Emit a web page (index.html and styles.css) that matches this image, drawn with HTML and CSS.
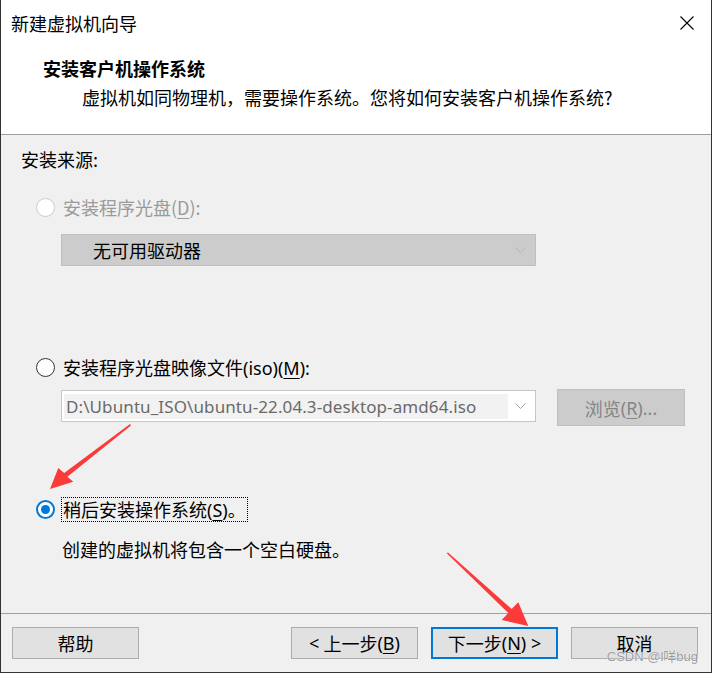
FILE: index.html
```html
<!DOCTYPE html>
<html lang="zh-CN">
<head>
<meta charset="utf-8">
<title>新建虚拟机向导</title>
<link rel="stylesheet" href="styles.css">
</head>
<body>
<div class="window">
  <header class="head">
    <div class="titlebar">
      <span class="title">新建虚拟机向导</span>
      <svg class="close" width="14" height="14" viewBox="0 0 14 14"><path d="M0.5 0.5 L13.5 13.5 M13.5 0.5 L0.5 13.5" stroke="#000" stroke-width="1.1" fill="none"/></svg>
    </div>
    <h1 class="heading">安装客户机操作系统</h1>
    <p class="subtitle">虚拟机如同物理机，需要操作系统。您将如何安装客户机操作系统?</p>
  </header>
  <main class="body">
    <div class="section-label">安装来源:</div>

    <div class="radio-row radio-row--first">
      <span class="radio radio--disabled"></span>
      <span class="label label--disabled">安装程序光盘(<u>D</u>):</span>
    </div>
    <div class="combo combo--disabled">
      <span class="combo-text">无可用驱动器</span>
      <svg class="chev" width="11" height="6" viewBox="0 0 11 6"><path d="M0.5 0.5 L5.5 5.5 L10.5 0.5" stroke="#b4b4b4" fill="none"/></svg>
    </div>

    <div class="radio-row radio-row--second">
      <span class="radio"></span>
      <span class="label">安装程序光盘映像文件<span class="latin">(iso)(<u>M</u>):</span></span>
    </div>
    <div class="iso-row">
      <div class="combo combo--iso">
        <span class="iso-field">D:\Ubuntu_ISO\ubuntu-22.04.3-desktop-amd64.iso</span>
        <svg class="chev" width="11" height="6" viewBox="0 0 11 6"><path d="M0.5 0.5 L5.5 5.5 L10.5 0.5" stroke="#a0a0a0" fill="none"/></svg>
      </div>
      <div class="btn btn--browse">浏览<span class="latin">(<u>R</u>)...</span></div>
    </div>

    <div class="radio-row radio-row--third">
      <span class="radio radio--checked"><span class="dot"></span></span>
      <span class="label label--focus">稍后安装操作系统<span class="latin">(<u>S</u>)</span>。</span>
    </div>
    <p class="note">创建的虚拟机将包含一个空白硬盘。</p>
  </main>
  <footer class="foot">
    <div class="btn">帮助</div>
    <div class="foot-right">
      <div class="btn"><span class="latin">&lt;</span> 上一步<span class="latin">(<u>B</u>)</span></div>
      <div class="btn btn--default">下一步<span class="latin">(<u>N</u>) &gt;</span></div>
      <div class="btn">取消</div>
    </div>
  </footer>

  <svg class="arrows" width="712" height="673" viewBox="0 0 712 673">
    <polygon fill="#fb3a3a" points="130,424 131,425.6 67.4,476.7 73.3,481.7 50,489 58.3,468 64.2,472.9"/>
    <polygon fill="#fb3a3a" points="446.7,553.3 448,552.4 511.7,609.1 518.3,602.3 528.3,626 501.7,620 508.3,612.9"/>
  </svg>
  <div class="watermark">CSDN @l咩bug</div>
</div>
</body>
</html>
```

FILE: styles.css
```css
* { box-sizing: border-box; }
html, body { margin: 0; padding: 0; background: #f0f0f0; }
body {
  font-family: "Noto Sans CJK SC", "Noto Sans", sans-serif;
  font-size: 18px;
  color: #000;
}
.window {
  position: relative;
  width: 712px;
  height: 673px;
  border-left: 1px solid #333;
  border-right: 1px solid #333;
  border-bottom: 1px solid #333;
  display: flex;
  flex-direction: column;
  background: #f0f0f0;
  overflow: hidden;
}
.latin { font-family: "Noto Sans", "Noto Sans CJK SC", sans-serif; }
u { text-decoration-thickness: 1px; text-underline-offset: 3px; }

.head {
  background: #fff;
  height: 135px;
  border-bottom: 1px solid #a0a0a0;
  flex: none;
}
.titlebar {
  height: 46px;
  display: flex;
  align-items: center;
  justify-content: space-between;
  padding-left: 10px;
  padding-right: 17px;
}
.title { line-height: 24px; }
.close { display: block; }
.heading {
  margin: 10px 0 0 42px;
  font-size: 18px;
  font-weight: 700;
  line-height: 24px;
}
.subtitle {
  margin: 5px 0 0 81px;
  line-height: 24px;
}

.body {
  flex: 1;
  padding: 12px 0 0 20px;
}
.section-label { line-height: 24px; }
.radio-row {
  display: flex;
  align-items: center;
  height: 24px;
  margin-left: 15px;
}
.radio-row--first { margin-top: 24px; }
.radio-row--second { margin-top: 89px; }
.radio-row--third { margin-top: 71px; }
.radio {
  width: 19px;
  height: 19px;
  border-radius: 50%;
  border: 1px solid #333;
  background: #fff;
  margin-right: 6px;
  display: flex;
  align-items: center;
  justify-content: center;
  flex: none;
}
.radio--disabled { border-color: #cccccc; }
.radio--checked { border: 2px solid #0078d7; }
.dot { width: 9px; height: 9px; border-radius: 50%; background: #0078d7; }
.label { line-height: 22px; padding: 0 1px; border: 1px solid transparent; }
.label--disabled { color: #9a9a9a; }
.label--focus { border: 1px dotted #000; }

.combo {
  width: 475px;
  height: 32px;
  margin-left: 40px;
  display: flex;
  align-items: center;
  justify-content: space-between;
  padding-right: 9px;
}
.combo--disabled {
  margin-top: 15px;
  background: #cccccc;
  border: 1px solid #bfbfbf;
  padding-left: 31px;
}
.combo-text { line-height: 24px; }
.chev { display: block; }

.iso-row {
  display: flex;
  align-items: flex-start;
  margin-top: 11px;
  height: 36px;
}
.combo--iso {
  margin-top: 0;
  background: #fff;
  border: 1px solid #c6c6c6;
  padding-left: 2px;
}
.iso-field {
  width: 444px;
  height: 25px;
  background: #f2f2f2;
  font-family: "Noto Sans", sans-serif;
  font-size: 17px;
  line-height: 25px;
  color: #6a6a6a;
  padding-left: 2px;
  white-space: nowrap;
  overflow: hidden;
  letter-spacing: 0.1px;
}

.btn {
  width: 127px;
  height: 32px;
  background: #e1e1e1;
  border: 1px solid #adadad;
  display: flex;
  align-items: center;
  justify-content: center;
  line-height: 24px;
  white-space: pre;
}
.btn--browse {
  width: 128px;
  height: 37px;
  margin-left: 21px;
  margin-top: -1px;
  background: #cccccc;
  border-color: #bfbfbf;
  color: #858585;
}
.btn--default { border: 2px solid #0078d7; }

.note {
  margin: 16px 0 0 41px;
  line-height: 24px;
}

.foot {
  flex: none;
  height: 59px;
  border-top: 1px solid #a0a0a0;
  display: flex;
  justify-content: space-between;
  padding: 13px 13px 0 11px;
}
.foot-right { display: flex; gap: 13px; }

.arrows {
  position: absolute;
  left: -1px;
  top: 0;
  pointer-events: none;
}
.watermark {
  position: absolute;
  right: 13px;
  bottom: 8px;
  font-family: "Liberation Sans", "Noto Sans CJK SC", sans-serif;
  font-size: 13px;
  line-height: 15px;
  color: #9a9a9a;
  text-shadow: 0 0 1px #fff, 0 0 1px #fff;
}
```
